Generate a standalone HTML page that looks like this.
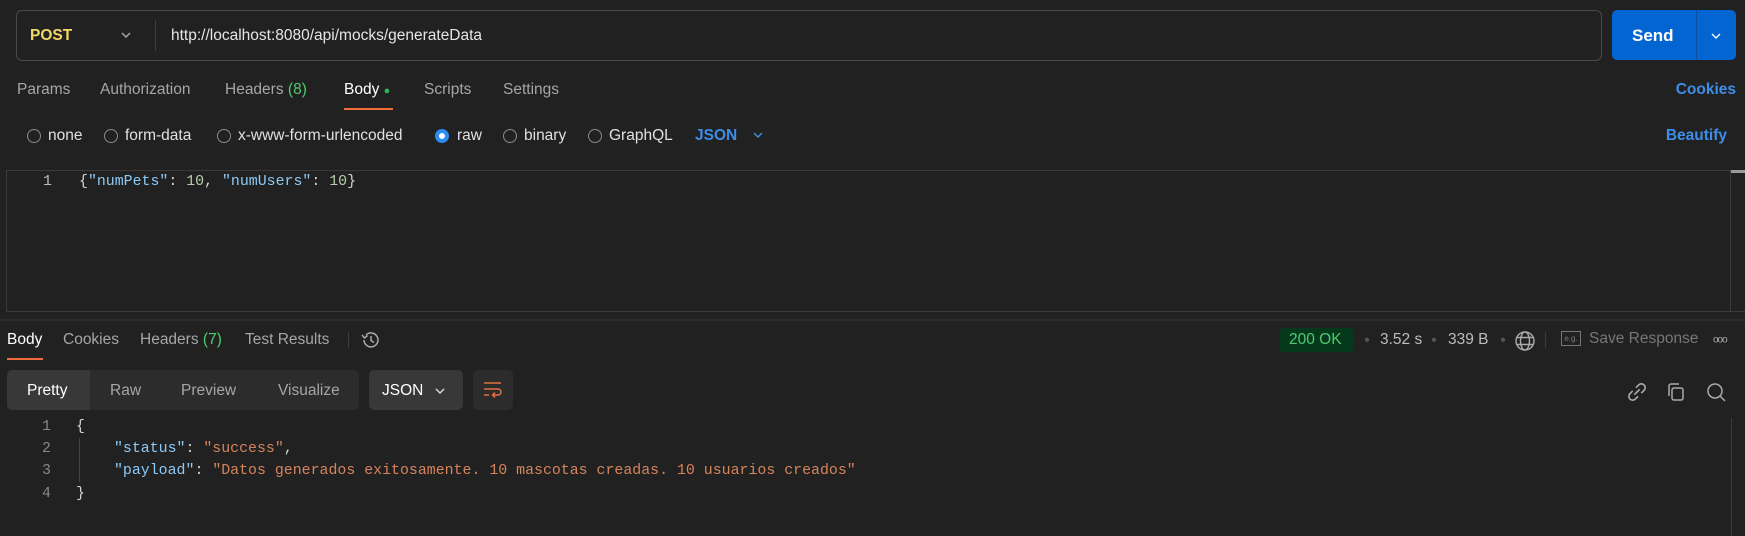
<!DOCTYPE html>
<html><head><meta charset="utf-8"><style>
*{box-sizing:border-box;margin:0;padding:0}
body{width:1745px;height:536px;background:#212121;font-family:"Liberation Sans",sans-serif;color:#a6a6a6;position:relative;overflow:hidden;font-size:15.5px}
.a{position:absolute;white-space:nowrap}
.m{font-family:"Liberation Mono",monospace;font-size:14.9px}
.c{transform:translateY(-50%)}
.rad{position:absolute;width:14px;height:14px;border:1.5px solid #8a8a8a;border-radius:50%;transform:translateY(-50%)}
.k{color:#8ccaf7}.s{color:#d6845c}.n{color:#b5cea8}.w{color:#d4d4d4}
</style></head><body>
<div class="a" style="left:16px;top:10px;width:1586px;height:51px;border:1px solid #4a4a4a;border-radius:6px"></div>
<div class="a c" style="left:30px;top:36px;color:#f2d864;font-weight:bold;font-size:15.5px">POST</div>
<svg class="a" style="left:120px;top:30px" width="12" height="10"><path d="M2 3l4 4 4-4" stroke="#aaa" stroke-width="1.4" fill="none"/></svg>
<div class="a" style="left:155px;top:20px;width:1px;height:31px;background:#3d3d3d"></div>
<div class="a c" style="left:171px;top:36px;color:#e6e6e6;font-size:15.5px">http://localhost:8080/api/mocks/generateData</div>
<div class="a" style="left:1612px;top:10px;width:124px;height:50px;background:#0265d2;border-radius:5px"></div>
<div class="a" style="left:1696px;top:10px;width:1px;height:50px;background:#0a4fa0"></div>
<div class="a c" style="left:1632px;top:36px;color:#fff;font-weight:bold;font-size:17px">Send</div>
<svg class="a" style="left:1710px;top:31px" width="12" height="10"><path d="M2 3l4 4 4-4" stroke="#fff" stroke-width="1.4" fill="none"/></svg>
<div class="a c" style="left:17px;top:90px">Params</div>
<div class="a c" style="left:100px;top:90px">Authorization</div>
<div class="a c" style="left:225px;top:90px">Headers <span style="color:#4ecb71">(8)</span></div>
<div class="a c" style="left:344px;top:90px;color:#fff">Body <span style="color:#2fb354;font-size:11px">●</span></div>
<div class="a" style="left:344px;top:108px;width:49px;height:2px;background:#f26b3a"></div>
<div class="a c" style="left:424px;top:90px">Scripts</div>
<div class="a c" style="left:503px;top:90px">Settings</div>
<div class="a c" style="right:9px;top:90px;color:#3d8ee8;font-weight:bold">Cookies</div>
<div class="rad" style="left:27px;top:136px"></div><div class="a c" style="left:48px;top:136px;color:#e0e0e0">none</div>
<div class="rad" style="left:104px;top:136px"></div><div class="a c" style="left:125px;top:136px;color:#e0e0e0">form-data</div>
<div class="rad" style="left:217px;top:136px"></div><div class="a c" style="left:238px;top:136px;color:#e0e0e0">x-www-form-urlencoded</div>
<div class="rad" style="left:435px;top:136px;border:4px solid #2d8cf0;background:#fff"></div><div class="a c" style="left:457px;top:136px;color:#e0e0e0">raw</div>
<div class="rad" style="left:503px;top:136px"></div><div class="a c" style="left:524px;top:136px;color:#e0e0e0">binary</div>
<div class="rad" style="left:588px;top:136px"></div><div class="a c" style="left:609px;top:136px;color:#e0e0e0">GraphQL</div>
<div class="a c" style="left:695px;top:136px;color:#3d8ee8;font-weight:bold">JSON</div>
<svg class="a" style="left:752px;top:130px" width="12" height="10"><path d="M2 3l4 4 4-4" stroke="#3d8ee8" stroke-width="1.4" fill="none"/></svg>
<div class="a c" style="right:18px;top:136px;color:#3d8ee8;font-weight:bold">Beautify</div>
<div class="a" style="left:6px;top:170px;width:1740px;height:142px;border:1px solid #3a3a3a;border-right:none"></div>
<div class="a" style="left:1730px;top:170px;width:15px;height:3px;background:#9a9a9a"></div>
<div class="a" style="left:1730px;top:170px;width:1px;height:142px;background:#3a3a3a"></div>
<div class="a c m" style="left:43px;top:182px;color:#bbb">1</div>
<div class="a c m w" style="left:79px;top:182px">{<span class="k">"numPets"</span>: <span class="n">10</span>, <span class="k">"numUsers"</span>: <span class="n">10</span>}</div>
<div class="a" style="left:0;top:319px;width:1745px;height:2px;background:#2c2c2c"></div>
<div class="a c" style="left:7px;top:340px;color:#fff">Body</div>
<div class="a" style="left:7px;top:358px;width:36px;height:2px;background:#f26b3a"></div>
<div class="a c" style="left:63px;top:340px">Cookies</div>
<div class="a c" style="left:140px;top:340px">Headers <span style="color:#4ecb71">(7)</span></div>
<div class="a c" style="left:245px;top:340px">Test Results</div>
<div class="a" style="left:348px;top:332px;width:1px;height:16px;background:#3d3d3d"></div>
<svg class="a" style="left:360px;top:329px" width="22" height="22" viewBox="0 0 22 22"><path d="M4 11a7 7 0 1 0 2-5" stroke="#aaa" stroke-width="1.5" fill="none"/><path d="M2 6l2.5 3 3-2.5" stroke="#aaa" stroke-width="1.5" fill="none"/><path d="M11 7v4.5l3 2" stroke="#aaa" stroke-width="1.5" fill="none"/></svg>
<div class="a" style="left:1280px;top:328px;width:74px;height:24px;background:#06391c;border-radius:3px"></div>
<div class="a c" style="left:1289px;top:340px;color:#4ecb71">200 OK</div>
<div class="a c" style="left:1364px;top:340px;color:#555;font-size:10px">●</div>
<div class="a c" style="left:1380px;top:340px;color:#bbb">3.52 s</div>
<div class="a c" style="left:1431px;top:340px;color:#555;font-size:10px">●</div>
<div class="a c" style="left:1448px;top:340px;color:#bbb">339 B</div>
<div class="a c" style="left:1500px;top:340px;color:#555;font-size:10px">●</div>
<svg class="a" style="left:1514px;top:330px" width="22" height="22" viewBox="0 0 22 22"><circle cx="11" cy="11" r="9" stroke="#aaa" stroke-width="1.4" fill="none"/><ellipse cx="11" cy="11" rx="4.5" ry="9" stroke="#aaa" stroke-width="1.4" fill="none"/><path d="M2.5 7.5h17M2.5 14.5h17" stroke="#aaa" stroke-width="1.4"/></svg>
<div class="a" style="left:1545px;top:332px;width:1px;height:16px;background:#3d3d3d"></div>
<div class="a" style="left:1561px;top:331px;width:20px;height:15px;border:1px solid #777;color:#777;font-size:8px;line-height:13px;text-align:center">e.g.</div>
<div class="a c" style="left:1589px;top:339px;color:#777">Save Response</div>
<div class="a c" style="left:1713px;top:340px;color:#aaa;font-size:10px;letter-spacing:-1px">ooo</div>
<div class="a" style="left:7px;top:370px;width:352px;height:40px;background:#2c2c2c;border-radius:5px"></div>
<div class="a" style="left:7px;top:370px;width:83px;height:40px;background:#383838;border-radius:5px 0 0 5px"></div>
<div class="a c" style="left:27px;top:391px;color:#fff">Pretty</div>
<div class="a c" style="left:110px;top:391px">Raw</div>
<div class="a c" style="left:181px;top:391px">Preview</div>
<div class="a c" style="left:278px;top:391px">Visualize</div>
<div class="a" style="left:369px;top:370px;width:94px;height:40px;background:#383838;border-radius:5px"></div>
<div class="a c" style="left:382px;top:391px;color:#fff">JSON</div>
<svg class="a" style="left:434px;top:386px" width="12" height="10"><path d="M2 3l4 4 4-4" stroke="#ddd" stroke-width="1.4" fill="none"/></svg>
<div class="a" style="left:473px;top:370px;width:40px;height:40px;background:#2c2c2c;border-radius:5px"></div>
<svg class="a" style="left:482px;top:380px" width="22" height="20" viewBox="0 0 22 20"><path d="M2 3h17M2 9h14a3 3 0 0 1 0 6h-5M13 12.5l-2.5 2.5 2.5 2.5M2 15h5" stroke="#e2703f" stroke-width="1.5" fill="none"/></svg>
<svg class="a" style="left:1624px;top:379px" width="26" height="26" viewBox="0 0 24 24"><path d="M9.5 14.5l5-5M8 11l-2.5 2.5a3.5 3.5 0 0 0 5 5L13 16M16 13l2.5-2.5a3.5 3.5 0 0 0-5-5L11 8" stroke="#aaa" stroke-width="1.5" fill="none"/></svg>
<svg class="a" style="left:1664px;top:380px" width="24" height="24" viewBox="0 0 24 24"><rect x="8" y="8" width="11" height="12" rx="2" stroke="#aaa" stroke-width="1.5" fill="none"/><path d="M5 16V6a2 2 0 0 1 2-2h8" stroke="#aaa" stroke-width="1.5" fill="none"/></svg>
<svg class="a" style="left:1704px;top:380px" width="24" height="24" viewBox="0 0 24 24"><circle cx="11" cy="11" r="7" stroke="#aaa" stroke-width="1.5" fill="none"/><path d="M16 16l5 5" stroke="#aaa" stroke-width="1.5"/></svg>
<div class="a" style="left:1731px;top:418px;width:1px;height:118px;background:#3a3a3a"></div>
<div class="a" style="left:79px;top:438px;width:1px;height:44px;background:#444"></div>
<div class="a c m" style="left:42px;top:427px;color:#888">1</div>
<div class="a c m" style="left:42px;top:449px;color:#888">2</div>
<div class="a c m" style="left:42px;top:471px;color:#888">3</div>
<div class="a c m" style="left:42px;top:494px;color:#888">4</div>
<div class="a c m w" style="left:76px;top:427px">{</div>
<div class="a c m w" style="left:114px;top:449px"><span class="k">"status"</span>: <span class="s">"success"</span>,</div>
<div class="a c m w" style="left:114px;top:471px"><span class="k">"payload"</span>: <span class="s">"Datos generados exitosamente. 10 mascotas creadas. 10 usuarios creados"</span></div>
<div class="a c m w" style="left:76px;top:494px">}</div>
</body></html>
